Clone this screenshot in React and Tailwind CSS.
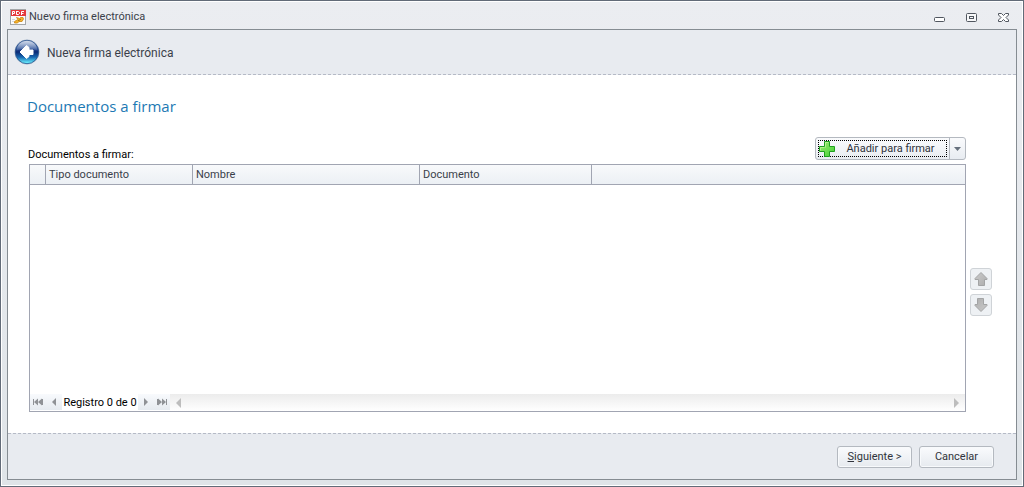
import React from 'react';

const columns = ['Tipo documento', 'Nombre', 'Documento'];

const navButton =
  'flex h-4 w-4 items-center justify-center text-[#8f9296] bg-linear-to-b from-[#f8fafd] to-[#e6ebf0]';

const moveButton =
  'flex h-[22px] w-[22px] items-center justify-center rounded-[3px] border border-[#cfd3d7] bg-[#eef1f4]';

const footerButton =
  'h-[22px] w-[75px] rounded-[3px] border border-[#b4b9c0] bg-linear-to-b from-[#fafbfd] to-[#e6eaef] pt-[2px] text-[#30343c] shadow-[inset_0_0_0_1px_#f8fafc]';

const PdfIcon = () => (
  <svg width="16" height="16" viewBox="0 0 16 16" aria-hidden="true">
    <rect x="0.5" y="0.5" width="15" height="15" fill="#fbfbfb" stroke="#a3a6a8" />
    <rect x="1" y="1" width="15" height="6" fill="#e5393c" />
    <path
      d="M2.5 6V2.5H4.5V4.5H2.5M6.5 2V5.5H8.5L9.5 4.5V3.5L8.5 2.5H6.5M11.5 6V2.5H14M11.5 4.5H13.5"
      fill="none"
      stroke="#fff"
    />
    <path
      d="M6.5 8.5L9.5 9.5L10.5 8.5H13L13.5 10L12 12.5H9L7.5 14H4.5V12.5L8 10.5Z"
      fill="#f6b52c"
      stroke="#c98410"
      strokeWidth="0.8"
    />
    <path d="M8 12L11 10" stroke="#8c5a08" strokeWidth="0.8" />
    <path d="M2 10.5H5M2 12.5H4" stroke="#d5d8dc" />
  </svg>
);

const BackIcon = () => (
  <svg width="26" height="26" viewBox="0 0 26 26" aria-hidden="true">
    <defs>
      <linearGradient id="orb" x1="0" y1="0" x2="0" y2="1">
        <stop offset="0" stopColor="#7d97c4" />
        <stop offset="0.35" stopColor="#294f98" />
        <stop offset="0.5" stopColor="#0b2a74" />
        <stop offset="0.72" stopColor="#1767b0" />
        <stop offset="0.95" stopColor="#63e4f8" />
      </linearGradient>
      <linearGradient id="gloss" x1="0" y1="0" x2="0" y2="1">
        <stop offset="0" stopColor="#fff" stopOpacity="0.65" />
        <stop offset="1" stopColor="#fff" stopOpacity="0.1" />
      </linearGradient>
    </defs>
    <circle cx="13" cy="13" r="12.5" fill="#b3bfd0" />
    <circle cx="13" cy="13" r="11.7" fill="url(#orb)" stroke="#27508c" strokeWidth="0.8" />
    <path d="M2.5 11.5C3 5.5 7.5 1.8 13 1.8S23 5.5 23.5 11.5C17 9 9 9 2.5 11.5Z" fill="url(#gloss)" />
    <path
      d="M6 13L12.5 6.5L15 8.5V11H19V15.5H15V17.5L12.5 19.5Z"
      fill="#fff"
      stroke="#fff"
      strokeLinejoin="round"
    />
  </svg>
);

const PlusIcon = () => (
  <svg width="16" height="16" viewBox="0 0 16 16" aria-hidden="true">
    <defs>
      <linearGradient id="plus" x1="0" y1="0" x2="1" y2="1">
        <stop offset="0" stopColor="#a4ec72" />
        <stop offset="1" stopColor="#3fcf33" />
      </linearGradient>
    </defs>
    <path
      d="M5.5 0.5H10.5V5.5H15.5V10.5H10.5V15.5H5.5V10.5H0.5V5.5H5.5Z"
      fill="url(#plus)"
      stroke="#1fa01f"
      strokeLinejoin="round"
    />
    <path d="M6.5 6.5V1.5H9.5M1.5 9.5V6.5H5.5" fill="none" stroke="#c4f5a2" strokeOpacity="0.7" />
  </svg>
);

const MoveIcon = ({ down }) => (
  <svg width="14" height="14" viewBox="0 0 14 14" className={down ? 'rotate-180' : ''} aria-hidden="true">
    <defs>
      <linearGradient id="move" x1="0" y1="0" x2="1" y2="1">
        <stop offset="0" stopColor="#cacaca" />
        <stop offset="1" stopColor="#adadad" />
      </linearGradient>
    </defs>
    <path
      d="M7 0.5L13 6.5V7.5H10.5V13.5H4.5V7.5H1V6.5Z"
      fill="url(#move)"
      stroke="#a3a4a5"
      strokeLinejoin="round"
    />
  </svg>
);

const NavIcon = ({ kind }) => (
  <svg
    width="10"
    height="8"
    viewBox="0 0 10 8"
    fill="currentColor"
    className={kind === 'next' || kind === 'last' ? 'rotate-180' : ''}
    aria-hidden="true"
  >
    {kind === 'first' || kind === 'last' ? (
      <path d="M0 1H1V7H0ZM5 0.5V7.5L1 4ZM9 0.5V7.5L5 4ZM9 1H10V7H9Z" />
    ) : (
      <path d="M7 0V8L3 4Z" />
    )}
  </svg>
);

const ScrollArrow = ({ right }) => (
  <svg
    width="5"
    height="10"
    viewBox="0 0 5 10"
    fill="currentColor"
    className={right ? 'rotate-180' : ''}
    aria-hidden="true"
  >
    <path d="M5 0V10L0 5Z" />
  </svg>
);

const TitleBar = () => (
  <header className="flex h-[27px] items-center pt-[2px] pr-[7px] pl-[3px] text-[#3b3f4a]">
    <PdfIcon />
    <span className="ml-[3px] pt-[2px]">Nuevo firma electrónica</span>
    <div className="ml-auto flex items-center gap-5 pt-[2px] text-[#50565f]">
      <button type="button" aria-label="Minimizar">
        <svg width="12" height="12" viewBox="0 0 12 12" fill="#fff" stroke="currentColor">
          <rect x="0.5" y="5.5" width="10" height="4" rx="1" />
        </svg>
      </button>
      <button type="button" aria-label="Maximizar">
        <svg width="12" height="12" viewBox="0 0 12 12" fill="#f7f8f9" stroke="currentColor">
          <rect x="0.5" y="1.5" width="10" height="8" rx="1" />
          <rect x="3.5" y="4.5" width="4" height="2" />
        </svg>
      </button>
      <button type="button" aria-label="Cerrar">
        <svg width="12" height="12" viewBox="0 0 12 12" fill="#fff" stroke="currentColor">
          <path
            d="M0.5 1.5H3.5L5.5 3.5L7.5 1.5H10.5V3L8 5.5L10.5 8V9.5H7.5L5.5 7.5L3.5 9.5H0.5V8L3 5.5L0.5 3Z"
            strokeLinejoin="round"
          />
        </svg>
      </button>
    </div>
  </header>
);

const DocumentGrid = () => (
  <div className="flex min-w-0 flex-1 flex-col border border-[#a1a5b2] bg-white">
    <table
      aria-labelledby="grid-label"
      className="w-full table-fixed border-separate border-spacing-0 text-[#3a3f4a]"
    >
      <colgroup>
        <col className="w-4" />
        <col className="w-[147px]" />
        <col className="w-[227px]" />
        <col className="w-[172px]" />
        <col />
      </colgroup>
      <thead>
        <tr className="h-5 bg-linear-to-b from-[#f8f9fb] to-[#ebeff4]">
          <th className="border-r border-b border-[#a1a5b2]"></th>
          {columns.map((name) => (
            <th
              key={name}
              className="border-r border-b border-[#a1a5b2] px-[3px] text-left leading-4 font-normal"
            >
              {name}
            </th>
          ))}
          <th className="border-b border-[#a1a5b2]"></th>
        </tr>
      </thead>
      <tbody></tbody>
    </table>

    {/* Record navigator and horizontal scroll */}
    <div className="mt-auto flex h-[17px] items-stretch">
      <button type="button" aria-label="Primero" className={navButton}>
        <NavIcon kind="first" />
      </button>
      <button type="button" aria-label="Anterior" className={navButton}>
        <NavIcon kind="prev" />
      </button>
      <span className="w-[76px] pt-px text-center leading-4 text-black">Registro 0 de 0</span>
      <button type="button" aria-label="Siguiente" className={navButton}>
        <NavIcon kind="next" />
      </button>
      <button type="button" aria-label="Último" className={navButton}>
        <NavIcon kind="last" />
      </button>
      <div className="flex flex-1 items-center justify-between bg-linear-to-b from-[#ececec] to-white px-[6px] text-[#bdbdbd]">
        <ScrollArrow />
        <ScrollArrow right />
      </div>
    </div>
  </div>
);

const App = () => {
  return (
    <div className="flex min-h-screen flex-col border border-[#626b78] bg-[#e4e7eb] font-[Roboto,sans-serif] text-[11px]">
      <div className="flex flex-1 flex-col border border-white bg-linear-to-b from-[#ebedf1] to-[#dfe4e8] px-[5px] pb-[5px]">
        <TitleBar />

        <div className="flex flex-1 flex-col border border-[#858c92] bg-white">
          <div className="flex h-[45px] items-center border-b border-dashed border-[#b5bac6] bg-[#e8ebf0] px-[6px]">
            <button type="button" aria-label="Atrás">
              <BackIcon />
            </button>
            <span className="ml-[7px] pt-px text-[12px] text-[#3b3f4a]">Nueva firma electrónica</span>
          </div>

          <main className="flex flex-1 flex-col pt-[19px] pr-6 pb-[21px] pl-[19px]">
            <h1 className="font-['Open_Sans',sans-serif] text-[15px] leading-6 text-[#1c79b4]">
              Documentos a firmar
            </h1>

            <div className="mt-[19px] mr-[26px] mb-1 flex items-end justify-between pl-px">
              <span id="grid-label" className="leading-[10px] text-black">
                Documentos a firmar:
              </span>
              <div className="flex h-[23px] w-[151px] rounded-[3px] border border-[#b4b9c0] bg-linear-to-b from-[#fafbfd] to-[#e8ecf1] text-[#30343c]">
                <button type="button" className="flex flex-1 p-[2px]">
                  <span className="flex h-full flex-1 items-center border border-dotted border-black">
                    <PlusIcon />
                    <span className="flex-1 pt-[2px] text-center">Añadir para firmar</span>
                  </span>
                </button>
                <button
                  type="button"
                  aria-label="Más opciones"
                  className="flex w-4 items-center justify-center border-l border-[#b4b9c0] text-[#66707d]"
                >
                  <svg width="7" height="4" viewBox="0 0 7 4" fill="currentColor">
                    <path d="M0 0H7L3.5 4Z" />
                  </svg>
                </button>
              </div>
            </div>

            <div className="flex flex-1 gap-1 pl-[2px]">
              <DocumentGrid />
              <div className="flex flex-col justify-center gap-1 pt-2">
                <button type="button" aria-label="Subir" disabled className={moveButton}>
                  <MoveIcon />
                </button>
                <button type="button" aria-label="Bajar" disabled className={moveButton}>
                  <MoveIcon down />
                </button>
              </div>
            </div>
          </main>

          <footer className="flex h-[46px] items-center justify-end gap-[7px] border-t border-dashed border-[#b5bac6] bg-[#e8ebf0] pr-[22px]">
            <button type="button" className={footerButton}>
              <u>S</u>iguiente &gt;
            </button>
            <button type="button" className={footerButton}>
              Cancelar
            </button>
          </footer>
        </div>
      </div>
    </div>
  );
};

export default App;
